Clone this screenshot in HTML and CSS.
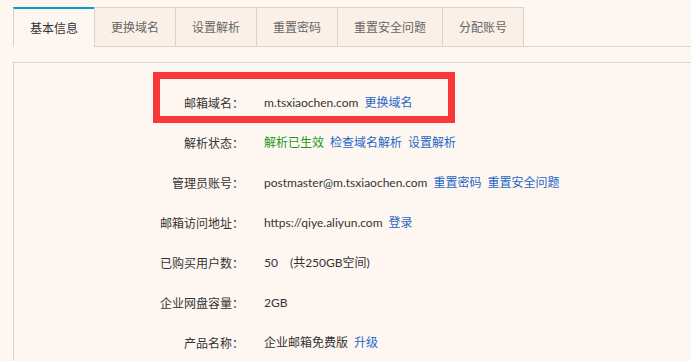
FILE: index.html
```html
<!DOCTYPE html>
<html lang="zh-CN">
<head>
<meta charset="utf-8">
<title>基本信息</title>
<link rel="stylesheet" href="styles.css">
</head>
<body>
<div class="page">
  <div class="tabs">
    <div class="tab active">基本信息</div>
    <div class="tab">更换域名</div>
    <div class="tab">设置解析</div>
    <div class="tab">重置密码</div>
    <div class="tab">重置安全问题</div>
    <div class="tab last">分配账号</div>
    <div class="tab-rest"></div>
  </div>
  <div class="panel">
    <div class="highlight"></div>
    <div class="info">
      <div class="label">邮箱域名：</div>
      <div class="value">m.tsxiaochen.com<a class="link">更换域名</a></div>

      <div class="label">解析状态：</div>
      <div class="value"><span class="ok">解析已生效</span><a class="link">检查域名解析</a><a class="link">设置解析</a></div>

      <div class="label">管理员账号：</div>
      <div class="value">postmaster@m.tsxiaochen.com<a class="link">重置密码</a><a class="link">重置安全问题</a></div>

      <div class="label">邮箱访问地址：</div>
      <div class="value">https://qiye.aliyun.com<a class="link">登录</a></div>

      <div class="label">已购买用户数：</div>
      <div class="value">50<span class="note">(共250GB空间)</span></div>

      <div class="label">企业网盘容量：</div>
      <div class="value">2GB</div>

      <div class="label">产品名称：</div>
      <div class="value">企业邮箱免费版<a class="link">升级</a></div>
    </div>
  </div>
</div>
</body>
</html>
```

FILE: styles.css
```css
html, body {
  margin: 0;
  padding: 0;
  background: #fef7f1;
}
body {
  font-family: "Noto Sans CJK SC", "Noto Sans", sans-serif;
  font-size: 12px;
  color: #333;
  overflow: hidden;
}
.page {
  padding: 7px 0 0 13px;
}
.tabs {
  display: flex;
  height: 40px;
}
.tab {
  box-sizing: border-box;
  height: 40px;
  padding: 0 16px;
  line-height: 38px;
  color: #666;
  background: #faf0e7;
  border-top: 1px solid #ddd3c8;
  border-left: 1px solid #ddd3c8;
  border-bottom: 1px solid #ddd3c8;
  white-space: nowrap;
}
.tab.active {
  background: #fef7f1;
  color: #333;
  border-top: 2px solid #00a0c8;
  border-bottom: 1px solid transparent;
  line-height: 37px;
}
.tab.last {
  border-right: 1px solid #ddd3c8;
}
.tab-rest {
  flex: 1;
  border-bottom: 1px solid #ddd3c8;
}
.panel {
  position: relative;
  margin-top: 15px;
  border-top: 1px solid #ddd3c8;
  border-left: 1px solid #ddd3c8;
  height: 300px;
}
.info {
  display: grid;
  grid-template-columns: 230px 1fr;
  column-gap: 20px;
  padding-top: 20px;
}
.label, .value {
  height: 40px;
  line-height: 40px;
  white-space: nowrap;
}
.label {
  text-align: right;
  color: #333;
}
.value {
  font-family: "Lato", "Noto Sans CJK SC", sans-serif;
  color: #333;
}
.link {
  color: #1f66c6;
  margin-left: 6px;
  cursor: pointer;
}
.ok {
  color: #1a9a1a;
}
.note {
  margin-left: 12px;
}
.highlight {
  position: absolute;
  left: 139px;
  top: 9px;
  width: 288px;
  height: 37px;
  border: 7px solid #fb3838;
  pointer-events: none;
}
```
